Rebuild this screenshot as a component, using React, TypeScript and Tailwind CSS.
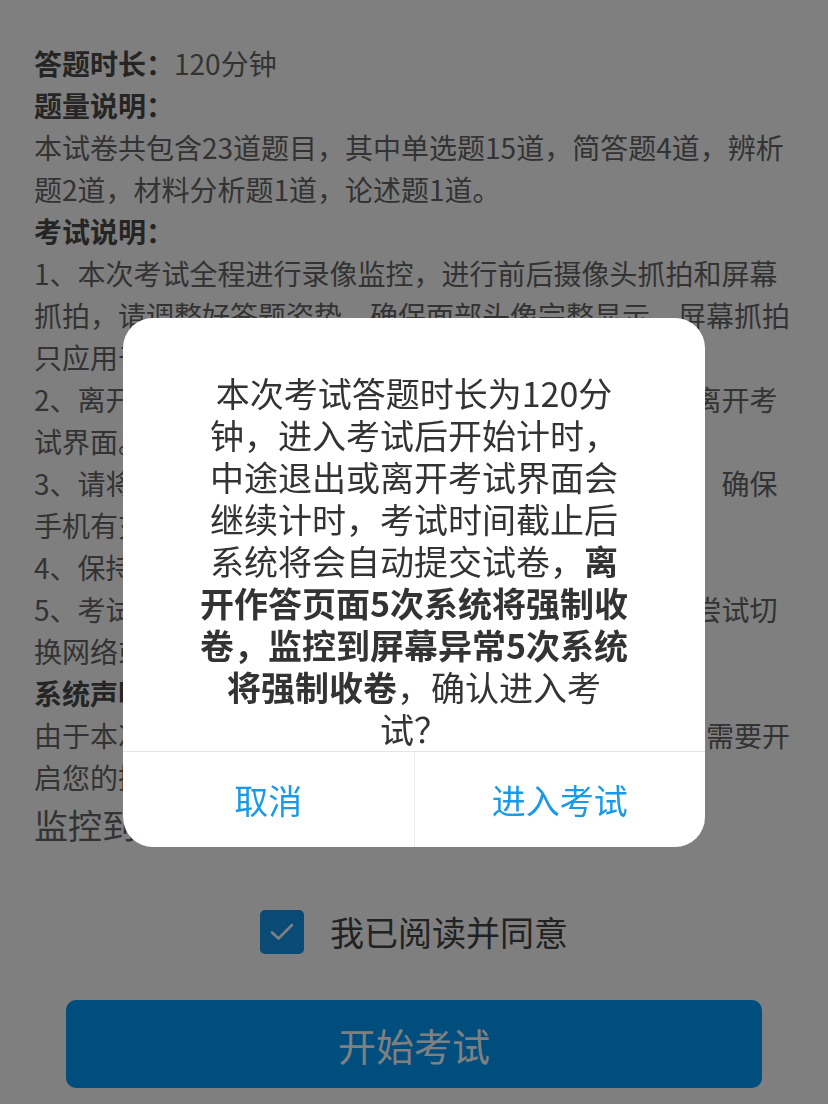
import { useState } from 'react';

const cjk = "font-['Noto_Sans_CJK_SC','Noto_Sans',sans-serif]";

export default function App() {
  const [agreed, setAgreed] = useState(true);
  const [open, setOpen] = useState(true);

  return (
    <div className={`${cjk} relative min-h-screen bg-white overflow-hidden`}>
      {/* Exam notes */}
      <div className="px-[34px] pt-[42px] text-[28px] leading-[42px] text-[#666]">
        <p>
          <span className="font-bold text-[#4a4a4a]">答题时长：</span>120分钟
        </p>
        <p className="font-bold text-[#4a4a4a]">题量说明：</p>
        <p>本试卷共包含23道题目，其中单选题15道，简答题4道，辨析题2道，材料分析题1道，论述题1道。</p>
        <p className="font-bold text-[#4a4a4a]">考试说明：</p>
        <p>1、本次考试全程进行录像监控，进行前后摄像头抓拍和屏幕抓拍，请调整好答题姿势，确保面部头像完整显示，屏幕抓拍只应用于考试监控。</p>
        <p>2、离开答题页面超过规定次数将自动交卷，请勿随意离开考试界面。</p>
        <p>3、请将手机设为勿扰模式，并关闭其他后台应用程序，确保手机有充足的电量和稳定的网络。</p>
        <p>4、保持网络畅通，考试过程中请勿切换应用。</p>
        <p>5、考试过程中如果网络异常，请不要退出考试，可以尝试切换网络或重新登录。</p>
        <p className="font-bold text-[#4a4a4a]">系统声明：</p>
        <p>由于本次考试为线上远程考试，为保证考试公平公正，需要开启您的摄像头及屏幕录制权限。</p>
        <p className="text-[34px] leading-[54px]">监控到异常行为时将记录并上报。</p>
      </div>

      {/* Agreement */}
      <div className="mt-[58px] flex items-center justify-center gap-[26px]">
        <button
          onClick={() => setAgreed(!agreed)}
          className={`w-[44px] h-[44px] rounded-[5px] flex items-center justify-center ${agreed ? 'bg-[#1496ea]' : 'border-2 border-[#ccc] bg-white'}`}
        >
          {agreed && (
            <svg width="24" height="18" viewBox="0 0 24 18" fill="none">
              <path d="M2 9.5l6.5 6L22 2" stroke="white" strokeWidth="2.6" strokeLinecap="round" strokeLinejoin="round" />
            </svg>
          )}
        </button>
        <span className="text-[34px] leading-none text-[#444]">我已阅读并同意</span>
      </div>

      <div className="px-[66px] mt-[46px]">
        <button className="w-full h-[88px] rounded-[10px] bg-[#009cfc] text-white text-[38px] flex items-center justify-center">
          开始考试
        </button>
      </div>

      {/* Confirm dialog */}
      {open && (
        <div className="fixed inset-0 bg-black/50 flex justify-center pt-[318px]">
          <div className="w-[582px] h-fit bg-white rounded-[30px] overflow-hidden">
            <p className="pt-[54px] text-center text-[34px] leading-[42px] text-[#333]">
              本次考试答题时长为120分<br />
              钟，进入考试后开始计时，<br />
              中途退出或离开考试界面会<br />
              继续计时，考试时间截止后<br />
              系统将会自动提交试卷，<b>离</b><br />
              <b>开作答页面5次系统将强制收</b><br />
              <b>卷，监控到屏幕异常5次系统</b><br />
              <b>将强制收卷</b>，确认进入考<br />
              试？
            </p>
            <div className="mt-px flex border-t border-[#e6e6e6] h-[96px]">
              <button
                onClick={() => setOpen(false)}
                className="flex-1 flex items-center justify-center text-[34px] text-[#1a9ae6] border-r border-[#ececec]"
              >
                取消
              </button>
              <button
                onClick={() => setOpen(false)}
                className="flex-1 flex items-center justify-center text-[34px] text-[#1a9ae6]"
              >
                进入考试
              </button>
            </div>
          </div>
        </div>
      )}
    </div>
  );
}
